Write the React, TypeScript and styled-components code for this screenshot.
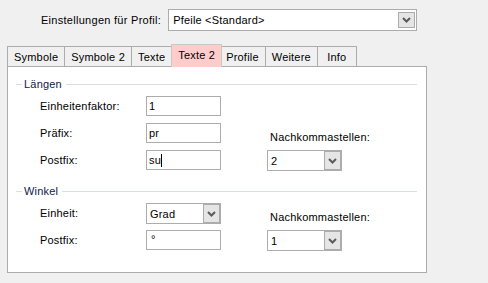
import React from "react";
import styled, { createGlobalStyle } from "styled-components";

const Global = createGlobalStyle`
  html, body { margin: 0; padding: 0; background: #f0f0f0; }
  body { font-family: "Liberation Sans", Arial, sans-serif; font-size: 11px; letter-spacing: 0.2px; color: #000; }
`;

const Window = styled.div`
  width: 488px;
  height: 283px;
  background: #f0f0f0;
  overflow: hidden;
`;

const Header = styled.div`
  display: flex;
  align-items: center;
  gap: 7px;
  padding: 9px 0 0 41px;
`;

const Label = styled.span`
  line-height: 14px;
  letter-spacing: 0.28px;
  white-space: nowrap;
`;

const ComboBox = styled.div<{ $w: number; $h: number; $inset: number }>`
  display: flex;
  align-items: stretch;
  box-sizing: border-box;
  width: ${(p) => p.$w}px;
  height: ${(p) => p.$h}px;
  border: 1px solid #acacac;
  background: #fff;
  padding: ${(p) => p.$inset}px ${(p) => (p.$inset ? 1 : 0)}px ${(p) => p.$inset}px 0;
`;

const ComboText = styled.div<{ $pad: number }>`
  flex: 1;
  display: flex;
  align-items: center;
  padding-left: ${(p) => p.$pad}px;
  white-space: nowrap;
`;

const DropButton = styled.div`
  width: 17px;
  box-sizing: border-box;
  border: 1px solid #acacac;
  background: #e5e5e5;
  display: flex;
  align-items: center;
  justify-content: center;
`;

const Chevron = () => (
  <svg width="9" height="6" viewBox="0 0 9 6">
    <polyline points="1,1 4.5,4.5 8,1" fill="none" stroke="#5a5a5a" strokeWidth="2" />
  </svg>
);

const TabStrip = styled.div`
  display: flex;
  align-items: flex-end;
  height: 22px;
  margin: 13px 0 0 7px;
  position: relative;
  z-index: 1;
`;

const Tab = styled.div<{ $active?: boolean }>`
  box-sizing: border-box;
  display: flex;
  align-items: center;
  justify-content: center;
  min-width: 40px;
  padding: 0 6px ${(p) => (p.$active ? 3 : 0)}px;
  height: ${(p) => (p.$active ? 23 : 20)}px;
  border: 1px solid ${(p) => (p.$active ? "#c9c9c9" : "#acacac")};
  border-bottom: none;
  background: ${(p) => (p.$active ? "#ffcccc" : "#f0f0f0")};
  margin: 0 ${(p) => (p.$active ? -2 : 0)}px ${(p) => (p.$active ? -1 : 0)}px -1px;
  position: relative;
  z-index: ${(p) => (p.$active ? 2 : 1)};
  white-space: nowrap;
  &:first-child { margin-left: 0; }
`;

const Panel = styled.div`
  box-sizing: border-box;
  width: 420px;
  height: 207px;
  margin-left: 7px;
  border: 1px solid #acacac;
  background: #fff;
  padding: 10px 9px 0 8px;
`;

const Group = styled.div<{ $top: number }>`
  margin-top: ${(p) => p.$top}px;
`;

const Legend = styled.div`
  display: flex;
  align-items: center;
  height: 14px;
`;

const Rule = styled.div<{ $w?: number }>`
  height: 1px;
  background: #d5dfe5;
  ${(p) => (p.$w ? `width: ${p.$w}px;` : "flex: 1;")}
`;

const LegendText = styled.span`
  color: #10204c;
  line-height: 14px;
  margin: 0 4px 0 2px;
`;

const FieldGrid = styled.div`
  display: grid;
  grid-template-columns: 106px 75px 46px 75px;
  grid-auto-rows: 20px;
  row-gap: 7px;
  padding-left: 24px;
  margin-top: 5px;
`;

const FieldLabel = styled.span<{ $row: number; $col: number; $low?: boolean }>`
  grid-row: ${(p) => p.$row};
  grid-column: ${(p) => p.$col};
  align-self: ${(p) => (p.$low ? "end" : "center")};
  margin-bottom: ${(p) => (p.$low ? -1 : 0)}px;
  padding-left: ${(p) => (p.$col > 1 ? 3 : 0)}px;
  line-height: 14px;
  white-space: nowrap;
`;

const Cell = styled.div<{ $row: number; $col: number }>`
  grid-row: ${(p) => p.$row};
  grid-column: ${(p) => p.$col};
  align-self: start;
`;

const TextBox = styled.div`
  box-sizing: border-box;
  width: 75px;
  height: 20px;
  border: 1px solid #acacac;
  background: #fff;
  padding-left: 2px;
  display: flex;
  align-items: center;
  white-space: nowrap;
`;

const Caret = styled.span`
  display: inline-block;
  width: 1px;
  height: 13px;
  background: #000;
`;

const Degree = styled.span`
  align-self: flex-start;
  margin-top: 2px;
  padding-left: 2px;
`;

const SmallCombo = ({ value }: { value: string }) => (
  <ComboBox $w={75} $h={21} $inset={0}>
    <ComboText $pad={3}>{value}</ComboText>
    <DropButton>
      <Chevron />
    </DropButton>
  </ComboBox>
);

const tabs = ["Symbole", "Symbole 2", "Texte", "Texte 2", "Profile", "Weitere", "Info"];

export default function App() {
  return (
    <Window>
      <Global />
      <Header>
        <Label>Einstellungen für Profil:</Label>
        <ComboBox $w={249} $h={22} $inset={2}>
          <ComboText $pad={4}>Pfeile &lt;Standard&gt;</ComboText>
          <DropButton>
            <Chevron />
          </DropButton>
        </ComboBox>
      </Header>
      <TabStrip>
        {tabs.map((t) => (
          <Tab key={t} $active={t === "Texte 2"}>
            {t}
          </Tab>
        ))}
      </TabStrip>
      <Panel>
        <Group $top={0}>
          <Legend>
            <Rule $w={6} />
            <LegendText>Längen</LegendText>
            <Rule />
          </Legend>
          <FieldGrid>
            <FieldLabel $row={1} $col={1}>Einheitenfaktor:</FieldLabel>
            <Cell $row={1} $col={2}>
              <TextBox>1</TextBox>
            </Cell>
            <FieldLabel $row={2} $col={1}>Präfix:</FieldLabel>
            <Cell $row={2} $col={2}>
              <TextBox>pr</TextBox>
            </Cell>
            <FieldLabel $row={2} $col={4} $low>Nachkommastellen:</FieldLabel>
            <FieldLabel $row={3} $col={1}>Postfix:</FieldLabel>
            <Cell $row={3} $col={2}>
              <TextBox>
                su
                <Caret />
              </TextBox>
            </Cell>
            <Cell $row={3} $col={4}>
              <SmallCombo value="2" />
            </Cell>
          </FieldGrid>
        </Group>
        <Group $top={14}>
          <Legend>
            <Rule $w={6} />
            <LegendText>Winkel</LegendText>
            <Rule />
          </Legend>
          <FieldGrid>
            <FieldLabel $row={1} $col={1}>Einheit:</FieldLabel>
            <Cell $row={1} $col={2}>
              <SmallCombo value="Grad" />
            </Cell>
            <FieldLabel $row={1} $col={4} $low>Nachkommastellen:</FieldLabel>
            <FieldLabel $row={2} $col={1}>Postfix:</FieldLabel>
            <Cell $row={2} $col={2}>
              <TextBox>
                <Degree>°</Degree>
              </TextBox>
            </Cell>
            <Cell $row={2} $col={4}>
              <SmallCombo value="1" />
            </Cell>
          </FieldGrid>
        </Group>
      </Panel>
    </Window>
  );
}
